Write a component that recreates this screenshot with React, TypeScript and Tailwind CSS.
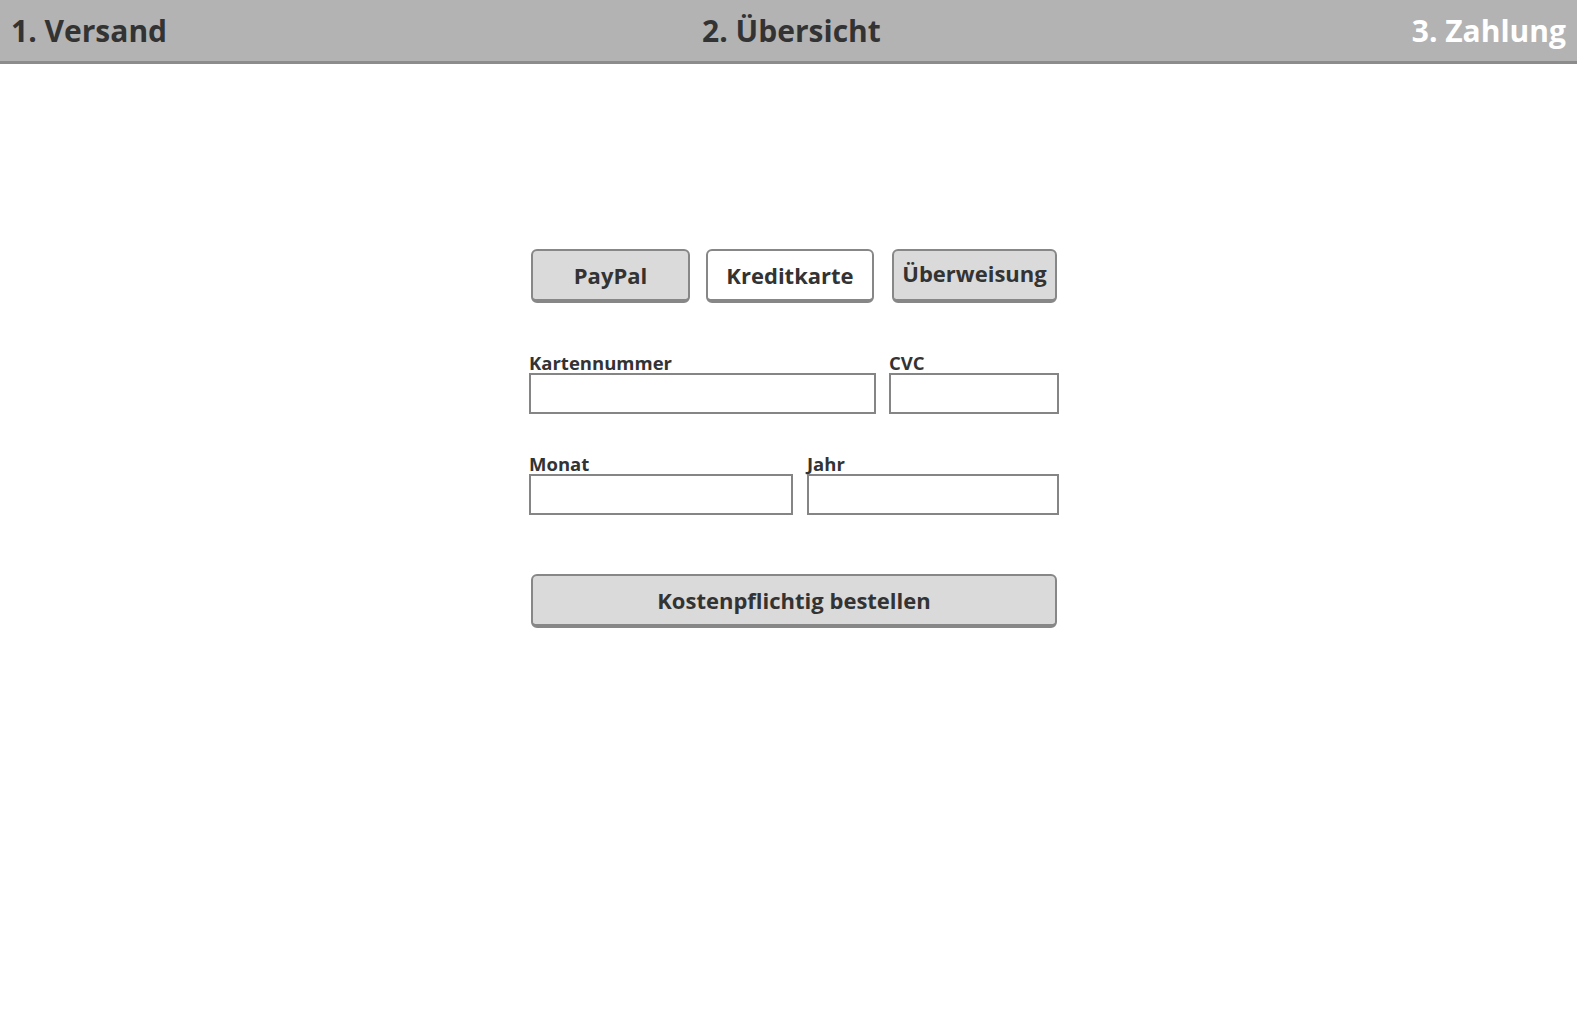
import React from "react";

const btnBase =
  "h-[54px] rounded-[6px] border-2 border-b-[4px] border-[#878787] text-[22px] font-bold text-[#333333] flex items-center justify-center leading-none";

function Field({ label, width }: { label: string; width: string }) {
  return (
    <div className={`flex flex-col ${width}`}>
      <div className="h-[20px] text-[18.5px] font-bold leading-[20px] text-[#333333]">{label}</div>
      <div className="h-[41px] border-2 border-[#858585] bg-white" />
    </div>
  );
}

export default function App() {
  return (
    <div className="min-h-screen bg-white font-['Open_Sans',sans-serif] text-[#333333]">
      <header className="h-[64px] bg-[#b3b3b3] border-b-[3px] border-[#8c8c8c] grid grid-cols-3 items-center px-[11px] text-[30px] font-bold leading-none">
        <div className="justify-self-start text-[#333333]">1. Versand</div>
        <div className="justify-self-center text-[#333333] pl-[6px]">2. Übersicht</div>
        <div className="justify-self-end text-white">3. Zahlung</div>
      </header>

      <main className="ml-[529px] w-[530px] pt-[185px] flex flex-col">
        <div className="flex">
          <button className={`${btnBase} ml-[2px] w-[159px] bg-[#dadada]`}>PayPal</button>
          <button className={`${btnBase} ml-[16px] w-[168px] bg-white`}>Kreditkarte</button>
          <button className={`${btnBase} ml-[18px] w-[165px] bg-[#dadada] pb-[4px]`}>Überweisung</button>
        </div>

        <div className="mt-[50px] flex gap-[13px]">
          <Field label="Kartennummer" width="w-[347px]" />
          <Field label="CVC" width="w-[170px]" />
        </div>

        <div className="mt-[40px] flex gap-[14px]">
          <Field label="Monat" width="w-[264px]" />
          <Field label="Jahr" width="w-[252px]" />
        </div>

        <button className={`${btnBase} mt-[59px] ml-[2px] w-[526px] bg-[#dadada]`}>
          Kostenpflichtig bestellen
        </button>
      </main>
    </div>
  );
}
